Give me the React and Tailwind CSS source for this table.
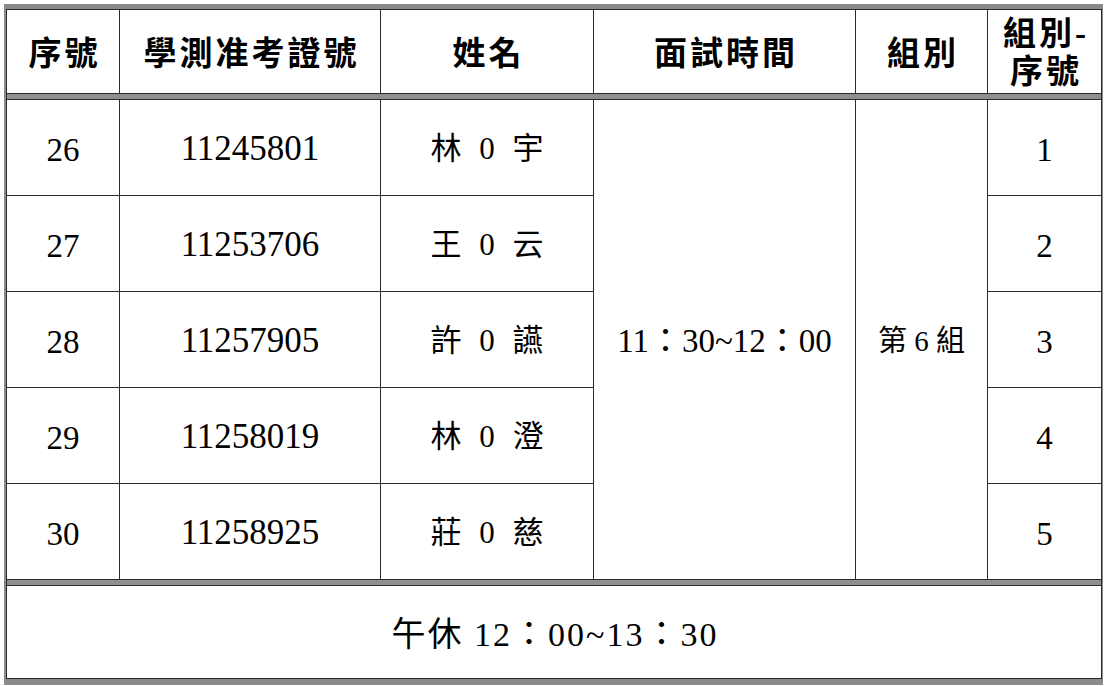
import React from 'react'

const rows = [
    { no: 26, id: '11245801', name: '林 0 宇', seq: 1 },
    { no: 27, id: '11253706', name: '王 0 云', seq: 2 },
    { no: 28, id: '11257905', name: '許 0 讌', seq: 3 },
    { no: 29, id: '11258019', name: '林 0 澄', seq: 4 },
    { no: 30, id: '11258925', name: '莊 0 慈', seq: 5 },
]

const cell = 'border border-[#2b2b2b] text-center align-middle p-0'

function Separator() {
    return (
        <tr>
            <td colSpan={6} className="h-[6px] p-0 bg-[#8f8f8f] border-y border-x border-[#2b2b2b]"></td>
        </tr>
    )
}

export default function App() {
    return (
        <div className="bg-white w-[1106px] h-[686px] pt-[4px] pl-[4px]" style={{ fontFamily: "'Liberation Serif', 'Noto Sans CJK TC', serif" }}>
            <div className="w-[1099px] border-t-[5px] border-b-[6px] border-x-[2px] border-[#8a8a8a]">
                <table className="w-[1095px] table-fixed border-collapse text-black">
                    <colgroup>
                        <col className="w-[113px]" />
                        <col className="w-[261px]" />
                        <col className="w-[213px]" />
                        <col className="w-[262px]" />
                        <col className="w-[132px]" />
                        <col className="w-[114px]" />
                    </colgroup>
                    <thead>
                        <tr className="h-[84px] text-[33px] font-bold tracking-[3px]">
                            <th className={`${cell} pt-[6px] pl-[3px]`}>序號</th>
                            <th className={`${cell} pt-[6px] pl-[3px]`}>學測准考證號</th>
                            <th className={`${cell} pt-[6px] pl-[3px]`}>姓名</th>
                            <th className={`${cell} pt-[6px] pl-[3px]`}>面試時間</th>
                            <th className={`${cell} pt-[6px] pl-[3px]`}>組別</th>
                            <th className={`${cell} leading-[38px] pt-[2px] pl-[3px]`}>組別-<br />序號</th>
                        </tr>
                    </thead>
                    <tbody>
                        <Separator />
                        {rows.map((r, i) => (
                            <tr key={r.no} className="h-[96px] text-[33px]">
                                <td className={`${cell} pt-[6px]`}>{r.no}</td>
                                <td className={`${cell} pt-[4px] text-[35px]`}>{r.id}</td>
                                <td className={`${cell} pt-[4px] pl-[5px] text-[31px] tracking-[5px]`}>{r.name}</td>
                                {i === 0 && (
                                    <>
                                        <td rowSpan={5} className={`${cell} pt-[4px] text-[33px]`}>11：30~12：00</td>
                                        <td rowSpan={5} className={`${cell} pt-[4px] text-[29px]`}>第 6 組</td>
                                    </>
                                )}
                                <td className={`${cell} pt-[6px]`}>{r.seq}</td>
                            </tr>
                        ))}
                        <Separator />
                        <tr className="h-[93px]">
                            <td colSpan={6} className={`${cell} pt-[4px] pl-[2px] text-[34px] tracking-[2px]`}>午休 12：00~13：30</td>
                        </tr>
                    </tbody>
                </table>
            </div>
        </div>
    )
}
